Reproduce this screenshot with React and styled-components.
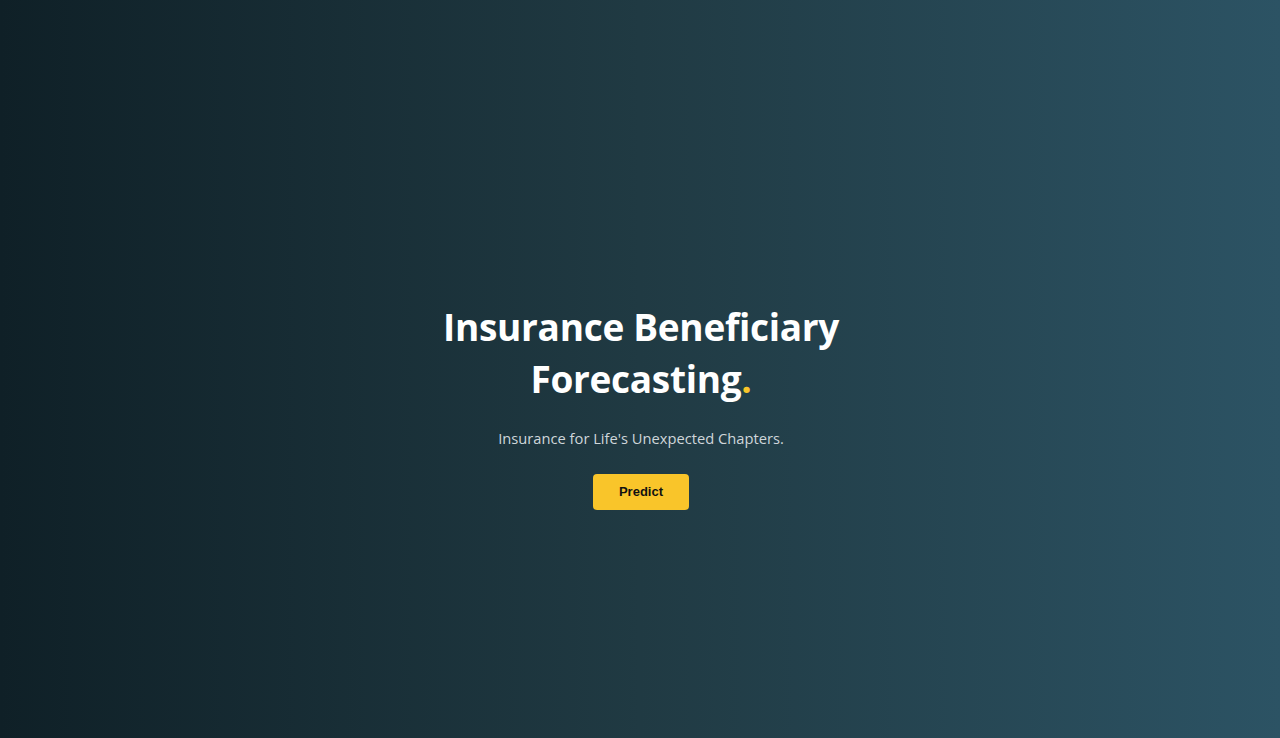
import React from "react";
import styled, { createGlobalStyle } from "styled-components";

const Global = createGlobalStyle`
  html, body { margin: 0; padding: 0; }
  body { font-family: "Open Sans", "Noto Sans", sans-serif; }
  * { box-sizing: border-box; }
`;

const Page = styled.main`
  min-height: 100vh;
  display: flex;
  align-items: center;
  justify-content: center;
  background: linear-gradient(to right, #0f2027, #203a43, #2c5364);
`;

const Hero = styled.section`
  display: flex;
  flex-direction: column;
  align-items: center;
  text-align: center;
  padding: 72px 0 0 2px;
`;

const Title = styled.h1`
  margin: 0;
  width: 420px;
  font-size: 37px;
  line-height: 52px;
  font-weight: 700;
  color: #ffffff;
  letter-spacing: -0.3px;
`;

const Dot = styled.span`
  color: #f9c52a;
`;

const Subtitle = styled.p`
  margin: 22px 0 0;
  font-size: 14.7px;
  line-height: 22px;
  color: #cfd6da;
`;

const Button = styled.button`
  margin-top: 25px;
  width: 96px;
  height: 36px;
  border: none;
  border-radius: 4px;
  background: #f9c52a;
  color: #111;
  font-family: "Liberation Sans", Arial, sans-serif;
  font-weight: 700;
  font-size: 13px;
  cursor: pointer;
`;

export default function App() {
  return (
    <>
      <Global />
      <Page>
        <Hero>
          <Title>
            Insurance Beneficiary Forecasting<Dot>.</Dot>
          </Title>
          <Subtitle>Insurance for Life's Unexpected Chapters.</Subtitle>
          <Button>Predict</Button>
        </Hero>
      </Page>
    </>
  );
}
